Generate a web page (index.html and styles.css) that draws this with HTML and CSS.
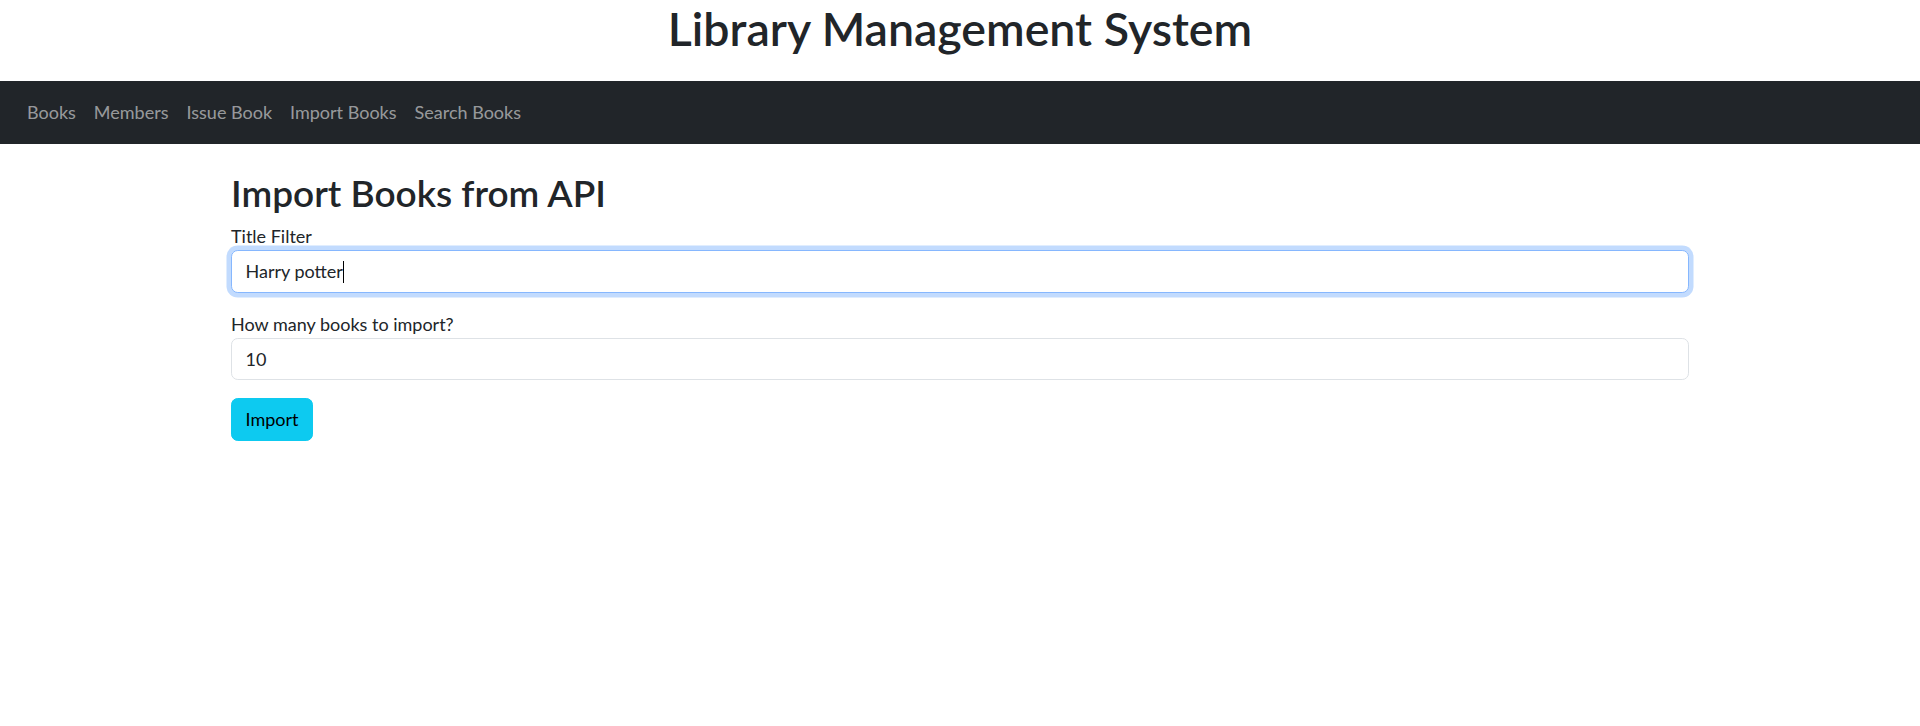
FILE: index.html
```html
<!DOCTYPE html>
<html lang="en">
<head>
<meta charset="utf-8">
<title>Library Management System</title>
<link rel="stylesheet" href="styles.css">
</head>
<body>
<h1 class="site-title">Library Management System</h1>
<nav class="navbar">
  <ul class="nav-list">
    <li><a class="nav-link" href="#">Books</a></li>
    <li><a class="nav-link" href="#">Members</a></li>
    <li><a class="nav-link" href="#">Issue Book</a></li>
    <li><a class="nav-link" href="#">Import Books</a></li>
    <li><a class="nav-link" href="#">Search Books</a></li>
  </ul>
</nav>
<main class="container">
  <h2 class="page-title">Import Books from API</h2>
  <form class="import-form">
    <div class="field">
      <label class="field-label" for="title">Title Filter</label>
      <div class="form-control is-focused" id="title"><span class="value">Harry potter</span><span class="caret"></span></div>
    </div>
    <div class="field">
      <label class="field-label" for="count">How many books to import?</label>
      <input class="form-control" id="count" type="number" value="10">
    </div>
    <button class="btn-info" type="button">Import</button>
  </form>
</main>
</body>
</html>
```
FILE: styles.css
```css
body {
  margin: 0;
  font-family: "Lato", "Open Sans", sans-serif;
  font-size: 18px;
  line-height: 1.5;
  color: #212529;
  background: #fff;
}

.site-title {
  margin: 0 0 27px;
  padding-top: 1px;
  height: 53px;
  text-align: center;
  font-size: 46.5px;
  font-weight: 600;
  line-height: 54px;
}

.navbar {
  background: #212529;
  padding: 9px 18px;
}

.nav-list {
  display: flex;
  list-style: none;
  margin: 0;
  padding: 0;
}

.nav-link {
  display: block;
  padding: 9px;
  color: rgba(255, 255, 255, 0.55);
  text-decoration: none;
}

.container {
  max-width: 1458px;
  margin: 27px auto 0;
}

.page-title {
  margin: 0 0 9px;
  font-size: 37px;
  font-weight: 600;
  line-height: 43.2px;
}

.field {
  margin-bottom: 18px;
}

.field-label {
  display: inline-block;
}

.form-control {
  display: block;
  width: 100%;
  box-sizing: border-box;
  height: 42.5px;
  padding: 6.75px 13.5px;
  font-family: inherit;
  font-size: 18px;
  line-height: 1.5;
  color: #212529;
  background: #fff;
  border: 1px solid #dee2e6;
  border-radius: 6.75px;
  outline: none;
}

.form-control.is-focused {
  border-color: #86b7fe;
  box-shadow: 0 0 0 4.5px rgba(13, 110, 253, 0.25);
}

.caret {
  display: inline-block;
  width: 1px;
  height: 22px;
  background: #000;
  vertical-align: -5px;
}

input[type="number"]::-webkit-inner-spin-button,
input[type="number"]::-webkit-outer-spin-button {
  -webkit-appearance: none;
  margin: 0;
}

.btn-info {
  display: inline-block;
  padding: 6.75px 13.5px;
  font-family: inherit;
  font-size: 18px;
  line-height: 1.5;
  color: #000;
  background: #0dcaf0;
  border: 1px solid #0dcaf0;
  border-radius: 6.75px;
  cursor: pointer;
}
```
